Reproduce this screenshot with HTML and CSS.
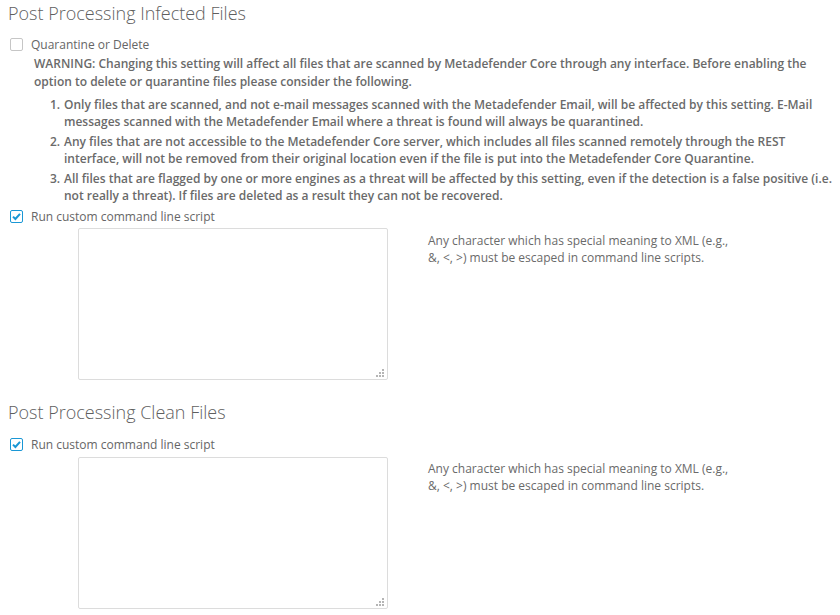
FILE: index.html
```html
<!DOCTYPE html>
<html>
<head>
<meta charset="utf-8">
<link rel="stylesheet" href="styles.css">
</head>
<body>
<div class="page">
  <section class="section">
    <h2 class="title">Post Processing Infected Files</h2>
    <label class="check-row first">
      <span class="box"></span>
      <span class="label">Quarantine or Delete</span>
    </label>
    <p class="warning">WARNING: Changing this setting will affect all files that are scanned by Metadefender Core through any interface. Before enabling the<br>option to delete or quarantine files please consider the following.</p>
    <ol class="list">
      <li><span class="num">1.</span><span>Only files that are scanned, and not e-mail messages scanned with the Metadefender Email, will be affected by this setting. E-Mail<br>messages scanned with the Metadefender Email where a threat is found will always be quarantined.</span></li>
      <li><span class="num">2.</span><span>Any files that are not accessible to the Metadefender Core server, which includes all files scanned remotely through the REST<br>interface, will not be removed from their original location even if the file is put into the Metadefender Core Quarantine.</span></li>
      <li><span class="num">3.</span><span>All files that are flagged by one or more engines as a threat will be affected by this setting, even if the detection is a false positive (i.e.<br>not really a threat). If files are deleted as a result they can not be recovered.</span></li>
    </ol>
    <label class="check-row">
      <span class="box checked"><svg viewBox="0 0 13 13" width="13" height="13"><path d="M3 6.6 L5.4 9 L10 3.8" fill="none" stroke="#1a97d5" stroke-width="2"/></svg></span>
      <span class="label">Run custom command line script</span>
    </label>
    <div class="script-row">
      <div class="ta-wrap">
        <textarea class="ta"></textarea>
        <svg class="grip" viewBox="0 0 8 8" width="8" height="8"><rect x="6" y="0" width="2" height="2"/><rect x="3" y="3" width="2" height="2"/><rect x="6" y="3" width="2" height="2"/><rect x="0" y="6" width="2" height="2"/><rect x="3" y="6" width="2" height="2"/><rect x="6" y="6" width="2" height="2"/></svg>
      </div>
      <p class="help">Any character which has special meaning to XML (e.g.,<br>&amp;, &lt;, &gt;) must be escaped in command line scripts.</p>
    </div>
  </section>
  <section class="section second">
    <h2 class="title">Post Processing Clean Files</h2>
    <label class="check-row first2">
      <span class="box checked"><svg viewBox="0 0 13 13" width="13" height="13"><path d="M3 6.6 L5.4 9 L10 3.8" fill="none" stroke="#1a97d5" stroke-width="2"/></svg></span>
      <span class="label">Run custom command line script</span>
    </label>
    <div class="script-row">
      <div class="ta-wrap">
        <textarea class="ta"></textarea>
        <svg class="grip" viewBox="0 0 8 8" width="8" height="8"><rect x="6" y="0" width="2" height="2"/><rect x="3" y="3" width="2" height="2"/><rect x="6" y="3" width="2" height="2"/><rect x="0" y="6" width="2" height="2"/><rect x="3" y="6" width="2" height="2"/><rect x="6" y="6" width="2" height="2"/></svg>
      </div>
      <p class="help">Any character which has special meaning to XML (e.g.,<br>&amp;, &lt;, &gt;) must be escaped in command line scripts.</p>
    </div>
  </section>
</div>
</body>
</html>
```
FILE: styles.css
```css
html, body {
  margin: 0;
  padding: 0;
  background: #fff;
}
body {
  font-family: "Open Sans", "Noto Sans", sans-serif;
  font-size: 12px;
  line-height: 17px;
  color: #666;
}
.page {
  padding: 1px 2px 0 8px;
  width: 830px;
}
.section {
  display: flex;
  flex-direction: column;
}
.section.second {
  margin-top: 20px;
}
.title {
  margin: 0;
  font-size: 18px;
  line-height: 24px;
  font-weight: 300;
  color: #5f5f5f;
}
.check-row {
  display: flex;
  align-items: center;
  margin-top: 4px;
  padding-left: 2px;
  height: 17px;
}
.check-row.first {
  margin-top: 10.5px;
}
.check-row.first2 {
  margin-top: 12px;
}
.box {
  width: 13px;
  height: 13px;
  box-sizing: border-box;
  border: 1px solid #c6c6c6;
  border-radius: 2px;
  background: #fff;
  position: relative;
  flex: none;
}
.box.checked {
  border-color: #1a97d5;
}
.box svg {
  position: absolute;
  left: -1px;
  top: -1px;
}
.label {
  margin-left: 8px;
  color: #666;
}
.warning {
  margin: 2.5px 0 0 26px;
  font-weight: 600;
  line-height: 18px;
  color: #6a6a6a;
}
.list {
  list-style: none;
  margin: 4.5px 0 0 42px;
  padding: 0;
  font-weight: 600;
  color: #6a6a6a;
  display: flex;
  flex-direction: column;
  gap: 3px;
}
.list li {
  display: flex;
}
.num {
  width: 14px;
  flex: none;
}
.script-row {
  display: flex;
  margin-top: 3.5px;
  padding-left: 70px;
}
.ta-wrap {
  position: relative;
  width: 310px;
  height: 152px;
  flex: none;
}
.ta {
  display: block;
  width: 100%;
  height: 100%;
  box-sizing: border-box;
  border: 1px solid #dcdcdc;
  border-radius: 2px;
  resize: none;
  margin: 0;
  padding: 4px;
  background: #fff;
}
.grip {
  position: absolute;
  right: 4px;
  bottom: 3px;
  fill: #b5b5b5;
}
.help {
  margin: 3.5px 0 0 40px;
  color: #6a6a6a;
}
```
